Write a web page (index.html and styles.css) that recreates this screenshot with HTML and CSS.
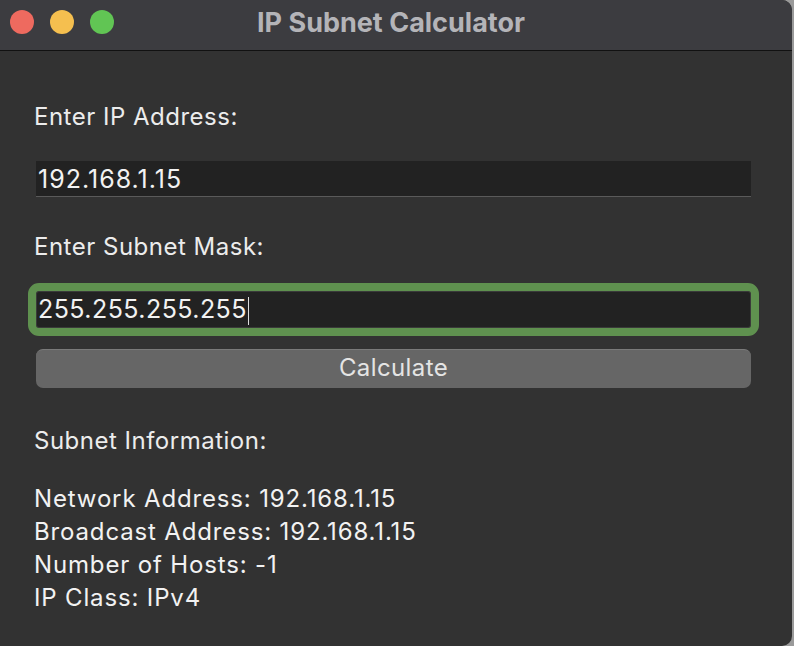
FILE: index.html
```html
<!DOCTYPE html>
<html>
<head>
	<title>IP Subnet Calculator</title>
	<meta charset="UTF-8">
	<link rel="stylesheet" href="styles.css">
</head>
<body>
	<div class="window">
		<header class="titlebar">
			<div class="lights">
				<span class="light red"></span>
				<span class="light yellow"></span>
				<span class="light green"></span>
			</div>
			<h1 class="title">IP Subnet Calculator</h1>
		</header>

		<main class="content">
			<p class="label first">Enter IP Address:</p>
			<div class="field">192.168.1.15</div>

			<p class="label second">Enter Subnet Mask:</p>
			<div class="field focused">255.255.255.255<span class="caret"></span></div>

			<button type="button" class="calc">Calculate</button>

			<p class="label info">Subnet Information:</p>
			<div class="results">
				<p>Network Address: 192.168.1.15</p>
				<p>Broadcast Address: 192.168.1.15</p>
				<p>Number of Hosts: -1</p>
				<p>IP Class: IPv4</p>
			</div>
		</main>
	</div>
</body>
</html>
```

FILE: styles.css
```css
* { box-sizing: border-box; }
html, body { margin: 0; padding: 0; }
body {
	background: #9a9a9a;
	font-family: "Inter", "Noto Sans", sans-serif;
	width: 794px;
	height: 646px;
	overflow: hidden;
}

.window {
	width: 792px;
	height: 646px;
	background: #323232;
	border-radius: 0 10px 10px 0;
	overflow: hidden;
}

.titlebar {
	position: relative;
	height: 51px;
	background: #3c3c40;
	border-bottom: 1px solid #111;
	display: flex;
	align-items: center;
	justify-content: center;
}

.lights {
	position: absolute;
	left: 10px;
	top: 10px;
	display: flex;
	gap: 16px;
}

.light {
	width: 24px;
	height: 24px;
	border-radius: 50%;
	display: block;
}
.red { background: #ee6a5f; }
.yellow { background: #f5bf4f; }
.green { background: #61c554; }

.title {
	margin: 0;
	font-size: 27px;
	font-weight: 700;
	color: #b4b4b8;
	margin-top: -6px;
	padding-right: 10px;
}

.content {
	padding: 0 40px 0 34px;
}

.label {
	margin: 0;
	font-size: 24px;
	line-height: 24px;
	letter-spacing: 0.5px;
	color: #ececec;
}
.label.first { margin-top: 54px; }
.label.second { margin-top: 38px; }
.label.info { margin-top: 41px; }

.field {
	margin: 32px 0 0 2px;
	width: 715px;
	height: 36px;
	background: #222;
	border-bottom: 1px solid #5a5a5a;
	color: #f2f2f2;
	font-size: 25px;
	letter-spacing: 1px;
	line-height: 36px;
	padding-left: 2px;
}

.field.focused {
	margin-top: 32px;
	height: 37px;
	border: 1px solid #3a3a3a;
	outline: 8px solid #5f914f;
	border-radius: 3px;
	line-height: 35px;
	padding-left: 1px;
	letter-spacing: 0.45px;
}

.caret {
	display: inline-block;
	width: 1px;
	height: 28px;
	background: #ddd;
	vertical-align: middle;
	margin-left: 1px;
}

.calc {
	display: block;
	margin: 21px 0 0 2px;
	width: 715px;
	height: 39px;
	background: #666;
	border: none;
	border-top: 1px solid #7a7a7a;
	border-radius: 7px;
	color: #e4e4e4;
	font-family: inherit;
	font-size: 24px;
	letter-spacing: 0.4px;
	padding: 0 0 4px;
}

.results {
	margin-top: 29px;
}

.results p {
	margin: 0;
	font-size: 24px;
	line-height: 33px;
	letter-spacing: 0.85px;
	color: #f2f2f2;
}
```
